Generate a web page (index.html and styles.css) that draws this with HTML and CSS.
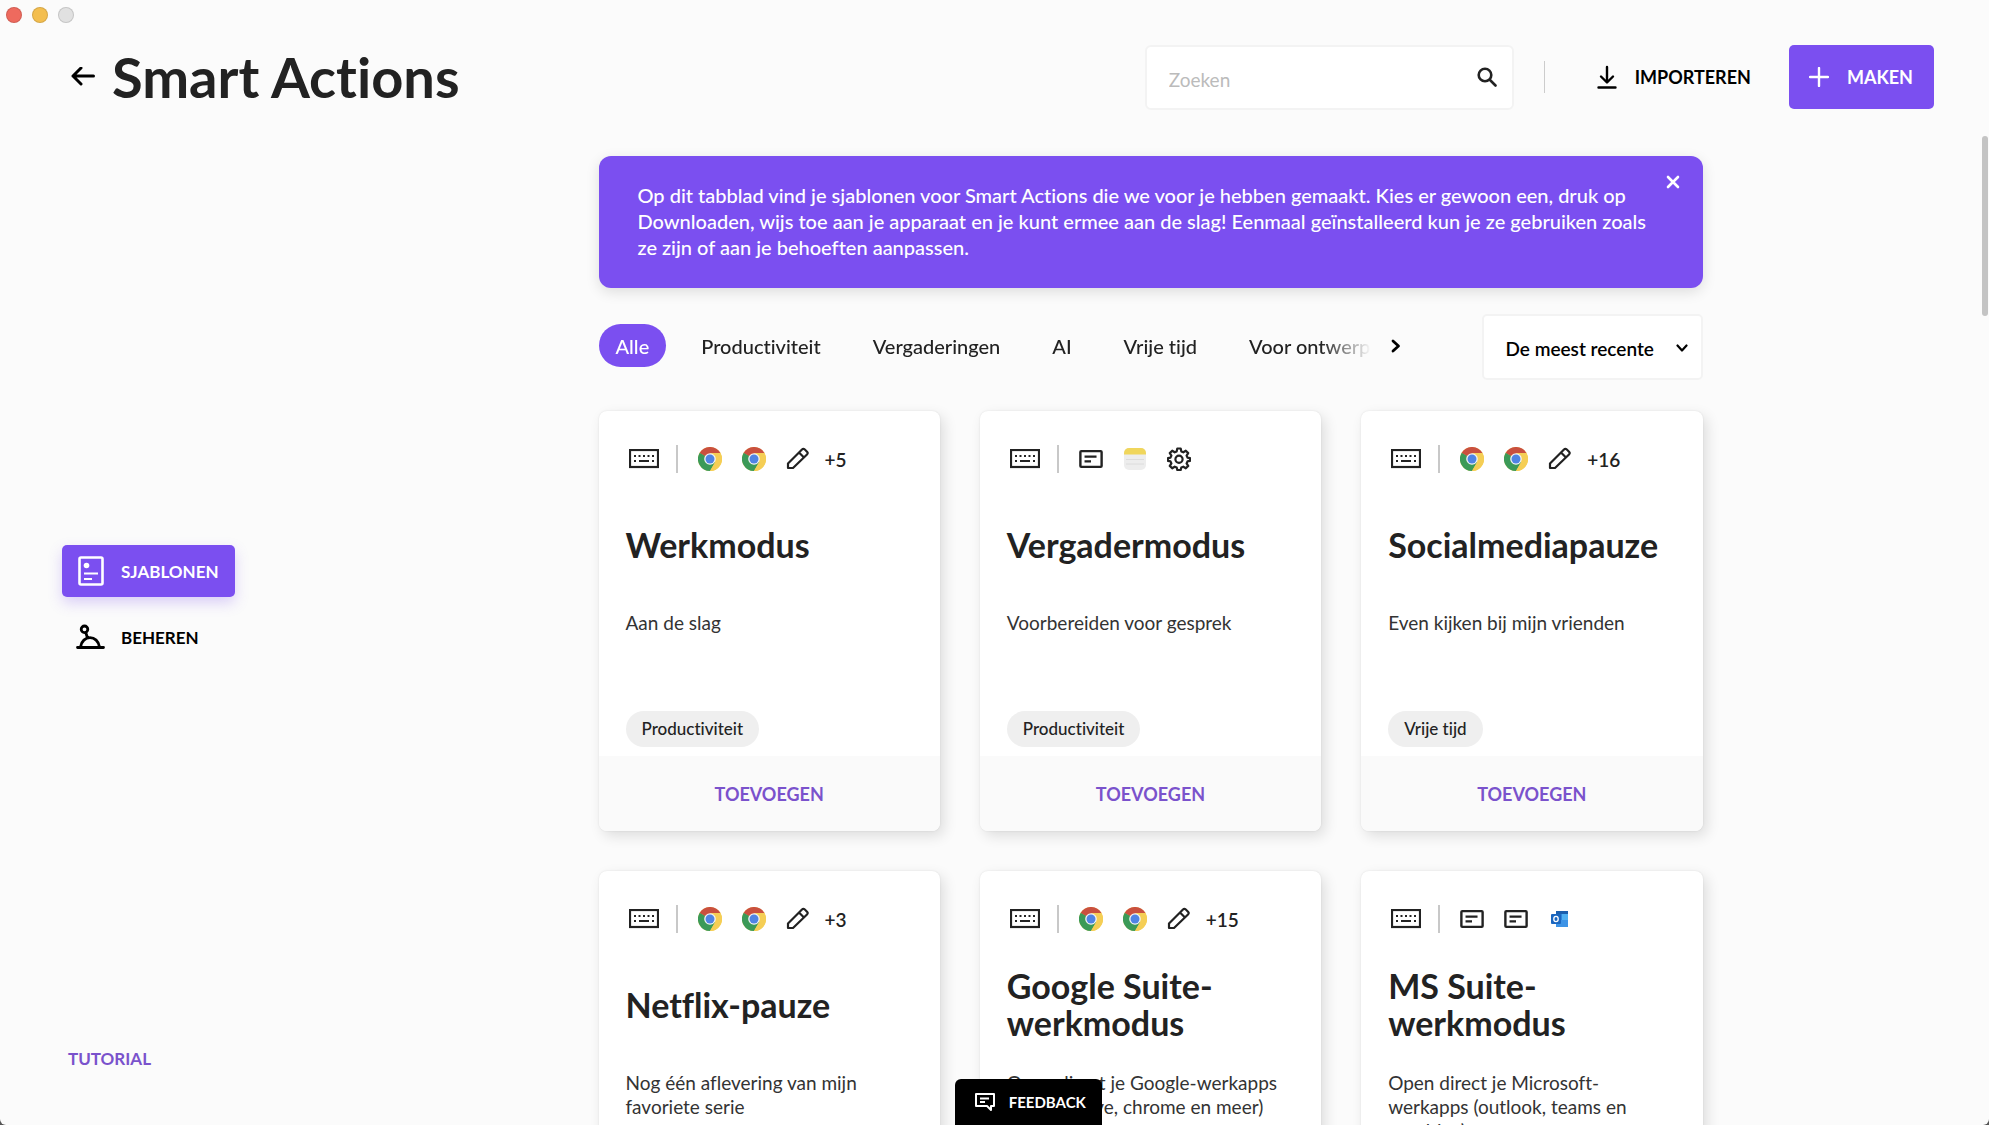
FILE: index.html
```html
<!DOCTYPE html>
<html lang="nl">
<head>
  <meta charset="UTF-8">
  <meta name="viewport" content="width=device-width, initial-scale=1.0">
  <title>Smart Actions</title>
  <link rel="stylesheet" href="styles.css">
</head>
<body>

  <!-- Icons -->
  <svg class="sprite" aria-hidden="true">
    <symbol id="icon-keyboard" viewBox="0 0 30 20">
      <rect x="1" y="1" width="28" height="17" fill="none" stroke="currentColor" stroke-width="2.200"/>
      <path d="M5 7h2M9.500 7h2M14 7h2M18.500 7h2M23 7h2M5 12h2M23 12h2M10 12h10" stroke="currentColor" stroke-width="2"/>
    </symbol>
    <symbol id="icon-chrome" viewBox="0 0 24 24">
      <circle cx="12" cy="12" r="12" fill="#f5ce55"/>
      <path d="M12 12 1.600 6A12 12 0 0 1 22.400 6z" fill="#c9503f"/>
      <path d="M1.600 6A12 12 0 0 0 12 24l5.200-9L12 12z" fill="#3b9a58"/>
      <path d="M1.600 6 6.800 15 12 12z" fill="#3b9a58"/>
      <path d="M22.400 6H12l5.200 9L12 24A12 12 0 0 0 22.400 6z" fill="#f5ce55"/>
      <circle cx="12" cy="12" r="5.800" fill="#f4f4f4"/>
      <circle cx="12" cy="12" r="4.500" fill="#4f84e4"/>
    </symbol>
    <symbol id="icon-pencil" viewBox="0 0 24 24">
      <path d="M2 21v-4.500L16 2.500a2 2 0 0 1 2.800 0l2.200 2.200a2 2 0 0 1 0 2.800L7 21zM13 5.500l5 5" fill="none" stroke="currentColor" stroke-width="2.200" stroke-linejoin="round"/>
    </symbol>
    <symbol id="icon-text" viewBox="0 0 26 20">
      <rect x="1.500" y="1.500" width="23" height="17" rx="1" fill="none" stroke="currentColor" stroke-width="2.600"/>
      <path d="M6 7.500h13M6 12.500h7" stroke="currentColor" stroke-width="2.400"/>
    </symbol>
    <symbol id="icon-notes" viewBox="0 0 24 24">
      <rect x="1" y="1" width="22" height="22" rx="5" fill="#ededed"/>
      <path d="M1 7.500V6a5 5 0 0 1 5-5h12a5 5 0 0 1 5 5v1.500z" fill="#f0d65c"/>
      <path d="M3 12.500h18M3 17h18" stroke="#dcdcdc"/>
    </symbol>
    <symbol id="icon-gear" viewBox="0 0 24 24">
      <path d="M10.300 1.500h3.400l.6 2.900 2 .9 2.500-1.600 2.400 2.400-1.600 2.500.9 2 2.500.5v2.800l-2.500.5-.9 2 1.600 2.500-2.400 2.400-2.500-1.600-2 .9-.6 2.400h-3.400l-.6-2.400-2-.9-2.500 1.600-2.400-2.400 1.600-2.500-.9-2-2.500-.5v-2.800l2.500-.5.9-2-1.600-2.500 2.400-2.400 2.500 1.600 2-.9z" fill="none" stroke="currentColor" stroke-width="2.200" stroke-linejoin="round"/>
      <circle cx="12" cy="12.300" r="3.600" fill="none" stroke="currentColor" stroke-width="2.200"/>
    </symbol>
    <symbol id="icon-outlook" viewBox="0 0 24 24">
      <path d="M8 4h12v16H8z" fill="#2f86dc"/>
      <path d="M8 4h12v3H8z" fill="#1b5fae"/>
      <path d="M14 7h6v6h-6z" fill="#4fb0f2"/>
      <path d="M8 13h12v7H8z" fill="#3d93e6"/>
      <rect x="3" y="7" width="10" height="10" rx="1" fill="#1a66bf"/>
      <ellipse cx="8" cy="12" rx="2.200" ry="2.600" fill="none" stroke="#fff" stroke-width="1.300"/>
    </symbol>
  </svg>

  <div class="window">
    <div class="titlebar">
      <span class="light red"></span>
      <span class="light yellow"></span>
      <span class="light gray"></span>
    </div>

    <header class="header">
      <button class="back-button" aria-label="Terug">
        <svg width="24" height="20" viewBox="0 0 24 20" fill="none" stroke="currentColor" stroke-width="3" stroke-linecap="round" stroke-linejoin="round"><path d="M22.500 9H2M10 1 2 9l8 8"/></svg>
      </button>
      <h1>Smart Actions</h1>

      <div class="search">
        <input type="text" placeholder="Zoeken" aria-label="Zoeken">
        <svg width="20" height="20" viewBox="0 0 20 20" fill="none" stroke="currentColor" stroke-width="2.600" stroke-linecap="round"><circle cx="8" cy="8" r="6.300"/><path d="m13 13 5.500 5.500"/></svg>
      </div>
      <span class="header-divider"></span>
      <button class="import-button">
        <svg width="20" height="24" viewBox="0 0 20 24" fill="none" stroke="currentColor" stroke-width="2.400" stroke-linecap="round" stroke-linejoin="round"><path d="M10 2v15M4 11.500l6 6 6-6M1.500 22.500h17"/></svg>
        IMPORTEREN
      </button>
      <button class="create-button">
        <svg width="20" height="20" viewBox="0 0 20 20" stroke="currentColor" stroke-width="2.400" stroke-linecap="round"><path d="M10 1v18M1 10h18"/></svg>
        MAKEN
      </button>
    </header>

    <div class="layout">
      <aside class="sidebar">
        <nav class="side-nav">
          <button class="side-item active">
            <svg width="26" height="30" viewBox="0 0 26 30" fill="none" stroke="currentColor" stroke-width="2.600"><rect x="1.500" y="1.500" width="23" height="27" rx="1.500"/><circle cx="8.500" cy="9.500" r="2.800" fill="currentColor" stroke="none"/><path d="M6 17.500h14M6 23h8" stroke-width="2.200"/></svg>
            SJABLONEN
          </button>
          <button class="side-item">
            <svg width="26" height="30" viewBox="1 -3 26 30" fill="none" stroke="currentColor" stroke-width="2.800" stroke-linecap="round" overflow="visible"><circle cx="7.500" cy="4.300" r="3.300"/><path d="m8.800 7.800 1.700 5M3.500 22c.8-6 5-9.300 9.500-9.300s8.700 3.300 9.500 9.300M.5 22.500h26"/></svg>
            BEHEREN
          </button>
        </nav>
        <a class="tutorial" href="#">TUTORIAL</a>
      </aside>

      <main class="content">
        <section class="banner">
          <p>Op dit tabblad vind je sjablonen voor Smart Actions die we voor je hebben gemaakt. Kies er gewoon een, druk op Downloaden, wijs toe aan je apparaat en je kunt ermee aan de slag! Eenmaal geïnstalleerd kun je ze gebruiken zoals ze zijn of aan je behoeften aanpassen.</p>
          <button class="banner-close" aria-label="Sluiten">
            <svg width="14" height="14" viewBox="0 0 14 14" stroke="currentColor" stroke-width="2.600" stroke-linecap="round"><path d="m2 2 10 10M12 2 2 12"/></svg>
          </button>
        </section>

        <div class="toolbar">
          <div class="tabs">
            <button class="tab active">Alle</button>
            <button class="tab">Productiviteit</button>
            <button class="tab">Vergaderingen</button>
            <button class="tab">AI</button>
            <button class="tab">Vrije tijd</button>
            <button class="tab">Voor ontwerpers</button>
          </div>
          <button class="tabs-next" aria-label="Volgende">
            <svg width="10" height="14" viewBox="0 0 10 14" fill="none" stroke="currentColor" stroke-width="2.800" stroke-linecap="round" stroke-linejoin="round"><path d="m2 2 5.500 5L2 12"/></svg>
          </button>
          <div class="sort">
            <select aria-label="Sorteren">
              <option>De meest recente</option>
            </select>
            <svg width="12" height="8" viewBox="0 0 12 8" fill="none" stroke="currentColor" stroke-width="2.200" stroke-linecap="round" stroke-linejoin="round"><path d="m1.500 1.500 4.500 5 4.500-5"/></svg>
          </div>
        </div>

        <div class="cards">
          <article class="card">
            <div class="card-icons">
              <svg class="keyboard"><use href="#icon-keyboard"/></svg>
              <span class="divider"></span>
              <svg><use href="#icon-chrome"/></svg>
              <svg><use href="#icon-chrome"/></svg>
              <svg><use href="#icon-pencil"/></svg>
              <span class="more">+5</span>
            </div>
            <h2>Werkmodus</h2>
            <p>Aan de slag</p>
            <span class="tag">Productiviteit</span>
            <button class="add-button">TOEVOEGEN</button>
          </article>

          <article class="card">
            <div class="card-icons">
              <svg class="keyboard"><use href="#icon-keyboard"/></svg>
              <span class="divider"></span>
              <svg><use href="#icon-text"/></svg>
              <svg><use href="#icon-notes"/></svg>
              <svg><use href="#icon-gear"/></svg>
            </div>
            <h2>Vergadermodus</h2>
            <p>Voorbereiden voor gesprek</p>
            <span class="tag">Productiviteit</span>
            <button class="add-button">TOEVOEGEN</button>
          </article>

          <article class="card">
            <div class="card-icons">
              <svg class="keyboard"><use href="#icon-keyboard"/></svg>
              <span class="divider"></span>
              <svg><use href="#icon-chrome"/></svg>
              <svg><use href="#icon-chrome"/></svg>
              <svg><use href="#icon-pencil"/></svg>
              <span class="more">+16</span>
            </div>
            <h2>Socialmediapauze</h2>
            <p>Even kijken bij mijn vrienden</p>
            <span class="tag">Vrije tijd</span>
            <button class="add-button">TOEVOEGEN</button>
          </article>

          <article class="card">
            <div class="card-icons">
              <svg class="keyboard"><use href="#icon-keyboard"/></svg>
              <span class="divider"></span>
              <svg><use href="#icon-chrome"/></svg>
              <svg><use href="#icon-chrome"/></svg>
              <svg><use href="#icon-pencil"/></svg>
              <span class="more">+3</span>
            </div>
            <h2>Netflix-pauze</h2>
            <p>Nog één aflevering van mijn favoriete serie</p>
            <span class="tag">Vrije tijd</span>
            <button class="add-button">TOEVOEGEN</button>
          </article>

          <article class="card">
            <div class="card-icons">
              <svg class="keyboard"><use href="#icon-keyboard"/></svg>
              <span class="divider"></span>
              <svg><use href="#icon-chrome"/></svg>
              <svg><use href="#icon-chrome"/></svg>
              <svg><use href="#icon-pencil"/></svg>
              <span class="more">+15</span>
            </div>
            <h2>Google Suite-werkmodus</h2>
            <p>Open direct je Google-werkapps (Gmail, Drive, chrome en meer)</p>
            <span class="tag">Productiviteit</span>
            <button class="add-button">TOEVOEGEN</button>
          </article>

          <article class="card">
            <div class="card-icons">
              <svg class="keyboard"><use href="#icon-keyboard"/></svg>
              <span class="divider"></span>
              <svg><use href="#icon-text"/></svg>
              <svg><use href="#icon-text"/></svg>
              <svg><use href="#icon-outlook"/></svg>
            </div>
            <h2>MS Suite-werkmodus</h2>
            <p>Open direct je Microsoft-werkapps (outlook, teams en onedrive)</p>
            <span class="tag">Productiviteit</span>
            <button class="add-button">TOEVOEGEN</button>
          </article>
        </div>
      </main>
      <span class="scroll-thumb"></span>
    </div>

    <button class="feedback">
      <svg width="20" height="18" viewBox="0 0 20 18" fill="none" stroke="currentColor" stroke-width="2" stroke-linejoin="round"><path d="M1 1h18v12h-3v4l-4-4H1zM5 5.500h9M5 9h5"/></svg>
      FEEDBACK
    </button>
  </div>

</body>
</html>
```

FILE: styles.css
```css
* {
  box-sizing: border-box;
}

html {
  background: #555;
}

body {
  margin: 0;
  font-family: Lato, 'Open Sans', sans-serif;
  font-size: 18px;
  font-variant-ligatures: no-common-ligatures;
  color: #222;
}

button,
input,
select {
  font: inherit;
  font-variant-ligatures: inherit;
  color: inherit;
  border: none;
  background: none;
  padding: 0;
}

button {
  cursor: pointer;
}

svg {
  display: block;
  flex: none;
}

h1,
h2,
p {
  margin: 0;
}

.sprite {
  position: absolute;
  width: 0;
  height: 0;
}

.window {
  position: relative;
  display: flex;
  flex-direction: column;
  height: 100vh;
  overflow: hidden;
  background: #fbfbfb;
  border-radius: 0 0 6px 6px;
}

.titlebar {
  display: flex;
  gap: 10px;
  height: 30px;
  padding: 7px 6px;
}

.light {
  width: 16px;
  height: 16px;
  border-radius: 50%;
  border: 1px solid rgba(0, 0, 0, 0.12);
}

.light.red {
  background: #ee6a5e;
}

.light.yellow {
  background: #f3be4f;
}

.light.gray {
  background: #e1e1e1;
}

/* Header */

.header {
  display: flex;
  align-items: center;
  height: 96px;
  padding: 0 55px 2px 71px;
  flex: none;
}

.back-button,
.import-button {
  color: #000;
}

.header h1 {
  flex: 1;
  margin-left: 17px;
  font-size: 56px;
  line-height: 64px;
  font-weight: 700;
}

.search {
  position: relative;
  width: 369px;
}

.search input {
  width: 100%;
  height: 65px;
  padding: 5px 56px 0 22px;
  font-size: 19px;
  background: #fff;
  border: 2px solid #f3f3f3;
  border-radius: 6px;
}

.search input::placeholder {
  color: #bbb;
  opacity: 1;
}

.search svg {
  position: absolute;
  right: 17px;
  top: 22px;
}

.header-divider {
  width: 1px;
  height: 32px;
  margin: 0 52px 0 30px;
  background: #ccc;
}

.import-button,
.create-button {
  display: flex;
  align-items: center;
  gap: 18px;
  font-weight: 700;
}

.create-button {
  height: 64px;
  margin-left: 38px;
  padding: 0 21px 0 20px;
  color: #fff;
  background: #7b4ff0;
  border-radius: 5px;
}

/* Sidebar */

.layout {
  position: relative;
  display: flex;
  flex: 1;
  min-height: 0;
}

.sidebar {
  display: flex;
  flex-direction: column;
  justify-content: space-between;
  width: 312px;
  padding: 419px 62px 54px;
  flex: none;
}

.side-nav {
  display: flex;
  flex-direction: column;
  align-items: flex-start;
  gap: 14px;
}

.side-item {
  display: flex;
  align-items: center;
  gap: 17px;
  height: 52px;
  padding: 0 16px;
  color: #000;
  font-size: 17px;
  font-weight: 700;
  border-radius: 5px;
}

.side-item.active {
  color: #fff;
  background: #7b4ff0;
  box-shadow: 0 6px 14px rgba(123, 79, 240, 0.25);
}

.tutorial {
  padding-left: 6px;
  font-size: 17px;
  line-height: 24px;
  font-weight: 700;
  color: #7a52cc;
  text-decoration: none;
}

/* Content */

.content {
  flex: 1;
  width: 100%;
  max-width: 1104px;
  margin: 0 auto;
  padding-top: 30px;
}

.banner {
  position: relative;
  padding: 26px 36px 28px 39px;
  color: #fff;
  background: #7b4ff0;
  border-radius: 12px;
  box-shadow: 0 4px 14px rgba(0, 0, 0, 0.12);
}

.banner p {
  font-size: 20px;
  line-height: 26px;
  font-weight: 500;
}

.banner-close {
  position: absolute;
  top: 19px;
  right: 23px;
}

.toolbar {
  display: flex;
  align-items: center;
  margin: 26px 0 31px;
}

.tabs {
  display: flex;
  gap: 18px;
  flex: 1;
  padding-bottom: 3px;
  overflow: hidden;
  -webkit-mask-image: linear-gradient(to right, #000 calc(100% - 50px), transparent);
  mask-image: linear-gradient(to right, #000 calc(100% - 50px), transparent);
}

.tab {
  height: 43px;
  padding: 0 17px;
  border-radius: 22px;
  white-space: nowrap;
  font-size: 20px;
  font-weight: 500;
}

.tab.active {
  color: #fff;
  background: #7b4ff0;
}

.tabs-next {
  margin: 0 81px 0 20px;
  padding-bottom: 3px;
  color: #000;
}

.sort {
  position: relative;
  color: #000;
}

.sort select {
  width: 221px;
  height: 66px;
  padding: 2px 22px 0;
  appearance: none;
  background: #fff;
  border: 2px solid #f3f3f3;
  border-radius: 5px;
  font-size: 19px;
  font-weight: 600;
}

.sort svg {
  position: absolute;
  right: 15px;
  top: 30px;
  pointer-events: none;
}

/* Cards */

.cards {
  display: grid;
  grid-template-columns: repeat(3, 1fr);
  gap: 40px;
}

.card {
  display: flex;
  flex-direction: column;
  align-items: flex-start;
  min-height: 420px;
  padding-top: 34px;
  overflow: hidden;
  background: #fff;
  border-radius: 8px;
  box-shadow: 0 0 2px rgba(0, 0, 0, 0.1), 4px 5px 14px rgba(0, 0, 0, 0.12);
}

.card-icons {
  display: flex;
  align-items: center;
  gap: 20px;
  height: 28px;
  padding-left: 30px;
}

.card-icons svg {
  width: 24px;
  height: 24px;
}

.card-icons .keyboard {
  width: 30px;
  height: 20px;
}

.divider {
  width: 2px;
  height: 28px;
  margin-left: -3px;
  background: #c8c8c8;
}

.more {
  margin-left: -5px;
  font-size: 19px;
  font-weight: 600;
}

.card h2 {
  display: flex;
  align-items: center;
  height: 74px;
  margin: 34px 27px 0;
  font-size: 34px;
  line-height: 37px;
  font-weight: 700;
}

.card p {
  height: 72px;
  margin: 30px 27px 28px;
  font-size: 19px;
  line-height: 24px;
  color: #333;
}

.tag {
  height: 36px;
  margin: 0 27px 9px;
  padding: 0 16px;
  font-size: 17px;
  line-height: 36px;
  font-weight: 500;
  background: #efefef;
  border-radius: 18px;
}

.add-button {
  width: 100%;
  flex: 1;
  font-weight: 700;
  color: #7a52cc;
  background: #fafafa;
}

.scroll-thumb {
  position: absolute;
  top: 10px;
  right: 1px;
  width: 6px;
  height: 180px;
  background: #c4c4c4;
  border-radius: 3px;
}

/* Feedback tab sticking out of the bottom edge */

.feedback {
  position: absolute;
  bottom: 0;
  left: 48%;
  display: flex;
  align-items: center;
  gap: 14px;
  height: 46px;
  padding: 0 16px 0 20px;
  color: #fff;
  font-size: 15px;
  font-weight: 700;
  background: #000;
  border-radius: 6px 6px 0 0;
}
```
